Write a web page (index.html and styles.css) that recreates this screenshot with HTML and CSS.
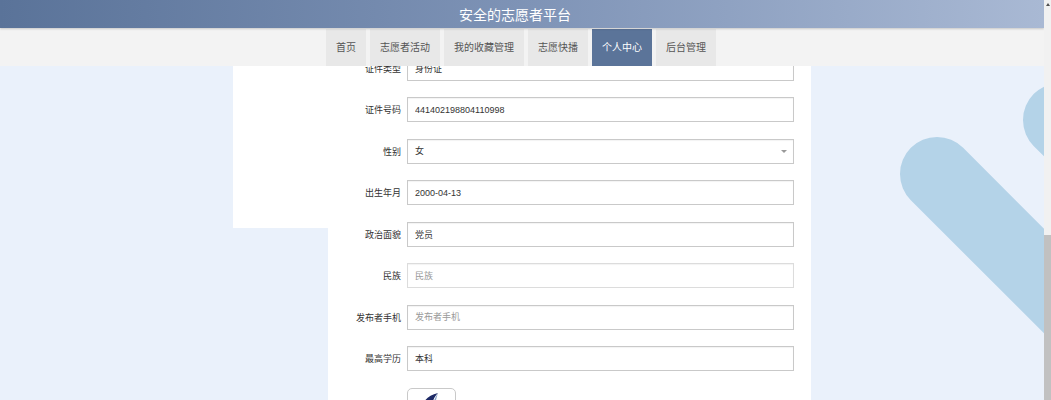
FILE: index.html
```html
<!DOCTYPE html>
<html lang="zh-CN">

<head>
  <meta charset="UTF-8">
  <meta name="viewport" content="width=device-width, initial-scale=1.0">
  <title>个人中心</title>
  <link rel="stylesheet" href="styles.css">
</head>

<body>
  <div class="page">
    <div class="screen">
      <!-- 背景装饰 -->
      <svg class="deco" width="1044" height="400" viewBox="0 0 1044 400">
        <line x1="937" y1="174" x2="1220" y2="457" stroke="#b4d3e8" stroke-width="74" stroke-linecap="round" />
        <line x1="1060" y1="120" x2="1220" y2="280" stroke="#b4d3e8" stroke-width="74" stroke-linecap="round" />
      </svg>

      <header class="topbar">
        <h1>安全的志愿者平台</h1>
      </header>
      <nav class="menu">
        <a href="#">首页</a>
        <a href="#">志愿者活动</a>
        <a href="#">我的收藏管理</a>
        <a href="#">志愿快播</a>
        <a href="#" class="active">个人中心</a>
        <a href="#">后台管理</a>
      </nav>

      <div class="main">
        <div class="side"></div>
        <div class="panel">
          <form class="form">
            <div class="row">
              <label>证件类型</label>
              <input type="text" value="身份证">
            </div>
            <div class="row">
              <label>证件号码</label>
              <input type="text" value="441402198804110998">
            </div>
            <div class="row">
              <label>性别</label>
              <div class="select">
                <select>
                  <option>女</option>
                  <option>男</option>
                </select>
              </div>
            </div>
            <div class="row">
              <label>出生年月</label>
              <input type="text" value="2000-04-13">
            </div>
            <div class="row">
              <label>政治面貌</label>
              <input type="text" value="党员">
            </div>
            <div class="row">
              <label>民族</label>
              <input type="text" class="focus" placeholder="民族">
            </div>
            <div class="row">
              <label>发布者手机</label>
              <input type="text" placeholder="发布者手机">
            </div>
            <div class="row">
              <label>最高学历</label>
              <input type="text" value="本科">
            </div>
            <div class="row">
              <label></label>
              <div class="avatar">
                <svg width="49" height="40" viewBox="0 0 49 40">
                  <path d="M16 16 C18 11 23 7 31 5 C28 8 26 12 25 16 Z" fill="#1d2a66" />
                  <path d="M31 5 C29 8 27 12 26 16 L28 16 C29 12 30 8 31 5 Z" fill="#8aa3c8" />
                </svg>
              </div>
            </div>
          </form>
        </div>
      </div>
    </div>
    <div class="scrollbar">
      <span class="arrow"></span>
      <span class="thumb"></span>
    </div>
  </div>
</body>

</html>
```

FILE: styles.css
```css
html,
body {
  margin: 0;
  height: 100%;
}
body {
  font-family: "Liberation Sans", "Noto Sans CJK SC", sans-serif;
  background: #eaf1fb;
  overflow: hidden;
}
.page {
  display: flex;
  height: 400px;
}
.screen {
  flex: 1;
  position: relative;
  display: flex;
  flex-direction: column;
  overflow: hidden;
}
.deco {
  position: absolute;
  top: 0;
  left: 0;
  z-index: 0;
}
.topbar {
  position: relative;
  z-index: 3;
  height: 28px;
  padding-right: 14px;
  display: flex;
  align-items: center;
  justify-content: center;
  background: linear-gradient(90deg, #5a7399, #7e93b6 50%, #a9b9d4);
  box-shadow: 0 1px 2px rgba(0, 0, 0, .18);
}
.topbar h1 {
  margin: 0;
  font-size: 14px;
  font-weight: normal;
  color: #fff;
}
.menu {
  position: relative;
  z-index: 2;
  height: 38px;
  padding-right: 2px;
  display: flex;
  align-items: flex-end;
  justify-content: center;
  gap: 4px;
  background: #f3f3f3;
}
.menu a {
  height: 37px;
  line-height: 37px;
  padding: 0 10px;
  font-size: 10px;
  color: #555;
  text-decoration: none;
  background: #e8e8e8;
}
.menu a.active {
  background: #5b7499;
  color: #fff;
}
.main {
  position: relative;
  z-index: 1;
  flex: 1;
  display: flex;
  justify-content: center;
  align-items: flex-start;
  overflow: hidden;
}
.side {
  width: 95px;
  height: 162px;
  background: #fff;
}
.panel {
  width: 483px;
  align-self: stretch;
  background: #fff;
  overflow: hidden;
}
.form {
  margin: -10.5px 0 0;
  padding-right: 17px;
}
.row {
  display: flex;
  align-items: center;
  margin-bottom: 16.5px;
}
.row label {
  width: 73px;
  margin-right: 6px;
  flex-shrink: 0;
  text-align: right;
  font-size: 9px;
  color: #333;
}
.row input,
.row select {
  width: 387px;
  height: 25px;
  box-sizing: border-box;
  margin: 0;
  padding: 0 7px;
  border: 1px solid #c9c9c9;
  border-radius: 0;
  font-family: "Liberation Sans", "Noto Sans CJK SC", sans-serif;
  font-size: 9px;
  color: #333;
  background: #fff;
  box-shadow: inset 0 1px 1px rgba(0, 0, 0, .05);
  outline: none;
}
.row input::placeholder {
  color: #9a9a9a;
}
.row input.focus {
  border-color: #dcdcdc;
}
.select {
  position: relative;
}
.select select {
  display: block;
  appearance: none;
  -webkit-appearance: none;
}
.select::after {
  content: "";
  position: absolute;
  top: 11px;
  right: 7px;
  border-left: 3px solid transparent;
  border-right: 3px solid transparent;
  border-top: 3px solid #999;
}
.avatar {
  width: 49px;
  height: 40px;
  box-sizing: border-box;
  border: 1px solid #c9c9c9;
  border-radius: 5px;
  overflow: hidden;
}
.avatar svg {
  display: block;
  margin: -1px;
}
.scrollbar {
  width: 7px;
  display: flex;
  flex-direction: column;
  align-items: center;
  background: #f1f1f1;
}
.arrow {
  margin-top: 3px;
  border-left: 2px solid transparent;
  border-right: 2px solid transparent;
  border-bottom: 3px solid #505050;
}
.thumb {
  margin-top: auto;
  width: 100%;
  height: 165px;
  background: #c1c1c1;
}
```
